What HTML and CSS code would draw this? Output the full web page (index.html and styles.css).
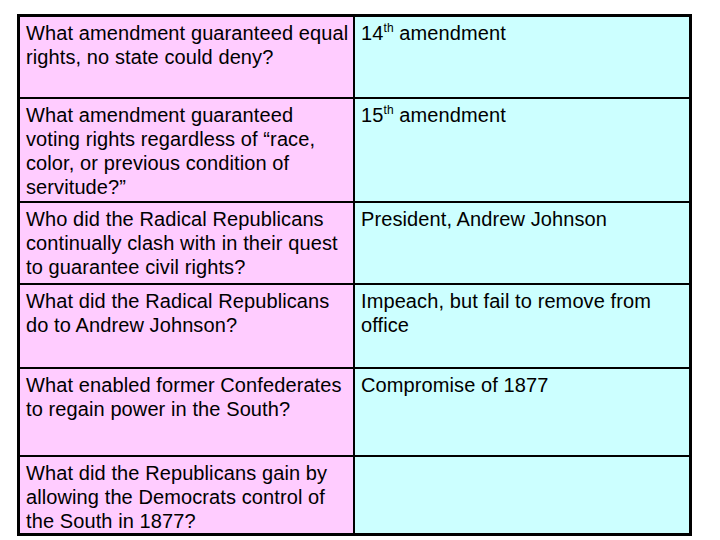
FILE: index.html
```html
<!DOCTYPE html>
<html>
<head>
<meta charset="utf-8">
<link rel="stylesheet" href="styles.css">
</head>
<body>
<div class="board">
  <div class="q r1">What amendment guaranteed equal rights, no state could deny?</div>
  <div class="a r1">14<sup>th</sup> amendment</div>
  <div class="q r2">What amendment guaranteed voting rights regardless of “race, color, or previous condition of servitude?”</div>
  <div class="a r2">15<sup>th</sup> amendment</div>
  <div class="q r3">Who did the Radical Republicans continually clash with in their quest to guarantee civil rights?</div>
  <div class="a r3">President, Andrew Johnson</div>
  <div class="q r4">What did the Radical Republicans do to Andrew Johnson?</div>
  <div class="a r4">Impeach, but fail to remove from office</div>
  <div class="q r5">What enabled former Confederates to regain power in the South?</div>
  <div class="a r5">Compromise of 1877</div>
  <div class="q r6">What did the Republicans gain by allowing the Democrats control of the South in 1877?</div>
  <div class="a r6"></div>
</div>
</body>
</html>
```
FILE: styles.css
```css
html, body {
  margin: 0;
  padding: 0;
  background: #ffffff;
}
body {
  padding: 14px 0 0 17px;
  font-family: "Liberation Sans", Arial, sans-serif;
  font-size: 20px;
  line-height: 24px;
  letter-spacing: 0.1px;
  color: #000;
}
.board {
  display: grid;
  grid-template-columns: 333px 334px;
  grid-template-rows: 80px 102px 80px 82px 86px 76px;
  gap: 2px;
  width: 669px;
  border: 3px solid #000;
  background: #000;
}
.q, .a {
  padding: 4px 2px 0 6px;
  overflow: hidden;
}
.q { background: #ffccff; }
.a { background: #ccffff; }
sup {
  font-size: 12px;
  line-height: 0;
  vertical-align: 8px;
}
```
